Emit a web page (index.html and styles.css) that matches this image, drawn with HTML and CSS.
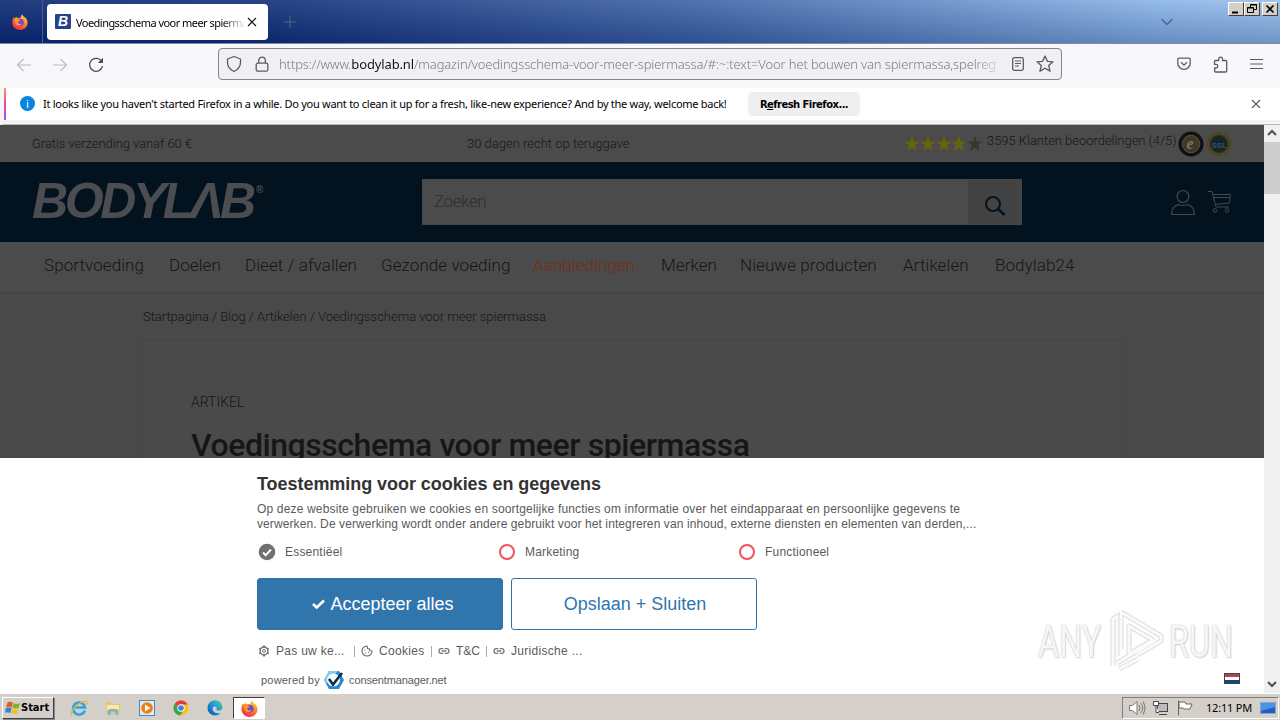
FILE: index.html
```html
<!DOCTYPE html>
<html lang="nl">
  <head>
    <meta charset="UTF-8" />
    <meta name="viewport" content="width=device-width, initial-scale=1.0" />
    <title>Voedingsschema voor meer spiermassa</title>
    <link rel="stylesheet" href="styles.css">
  </head>

  <body>
    <!-- shared icons -->
    <svg class="defs" width="0" height="0">
      <defs>
        <linearGradient id="fox" x1="0.8" y1="0" x2="0.3" y2="1">
          <stop offset="0" stop-color="#ffe03b" />
          <stop offset="0.45" stop-color="#ff8a1e" />
          <stop offset="1" stop-color="#f0254f" />
        </linearGradient>
        <linearGradient id="edge" x1="0" y1="1" x2="1" y2="0">
          <stop offset="0" stop-color="#0b4fa8" />
          <stop offset="0.55" stop-color="#1b9de2" />
          <stop offset="1" stop-color="#5fd068" />
        </linearGradient>
        <symbol id="firefox" viewBox="0 0 16 16">
          <path fill="url(#fox)" d="M1.6 3.2 2.6 4.4 4.2 2.6 5 4.1Q7 3.4 8.6 3.8L9 2 10.4.2 11 2Q15.700 4.700 15.600 9A7.600 7 0 0 1 .4 9Q.3 5.400 1.600 3.200z" />
          <circle cx="8.200" cy="8.300" r="3.600" fill="#7542e5" />
          <path fill="#ff9a28" d="M3 5q2.500-.7 4 .7l1.500.3-1.600 1.400-1.500.8q1.500 2.500 4.800 1.300Q8.500 12.500 5.500 11.200 2.600 9.500 3 5z" />
        </symbol>
        <symbol id="link" viewBox="0 0 12 12">
          <path fill="none" stroke="#777" stroke-width="1.300" d="M5.300 3.700H3.300a2.300 2.300 0 0 0 0 4.600h2M6.700 3.700h2a2.300 2.300 0 0 1 0 4.600h-2M3.700 6h4.600" />
        </symbol>
      </defs>
    </svg>

    <!-- tabs -->
    <header class="titlebar">
      <div class="fx-button">
        <svg width="16" height="16"><use href="#firefox" /></svg>
      </div>
      <div class="tab">
        <span class="favicon">B</span>
        <span class="tab-title">Voedingsschema voor meer spierma</span>
        <svg width="10" height="10" viewBox="0 0 10 10"><path d="M1 1l8 8M9 1L1 9" stroke="#15141a" stroke-width="1.200" /></svg>
      </div>
      <svg class="new-tab" width="12" height="12" viewBox="0 0 12 12"><path d="M6 0v12M0 6h12" stroke="#596770" stroke-width="1" /></svg>
      <svg class="tab-list" width="14" height="8" viewBox="0 0 14 8"><path d="M1.500 1L7 6.500 12.500 1" fill="none" stroke="#48658f" stroke-width="1.500" /></svg>
      <div class="win-buttons">
        <span class="win-btn"><svg width="14" height="12" viewBox="0 0 14 12"><path d="M3 9.500h6" stroke="#000" stroke-width="2" /></svg></span>
        <span class="win-btn"><svg width="14" height="12" viewBox="0 0 14 12"><path d="M5.500 4V1.500h6v5H9M5 2h7M2.500 4.500h6v5h-6zM2 5h7" fill="none" stroke="#000" /></svg></span>
        <span class="win-btn close"><svg width="14" height="12" viewBox="0 0 14 12"><path d="M3.500 2.500l7 7M10.500 2.500l-7 7" stroke="#000" stroke-width="1.600" /></svg></span>
      </div>
    </header>

    <!-- toolbar -->
    <div class="toolbar">
      <div class="nav-icons">
        <svg width="16" height="16" viewBox="0 0 16 16"><path d="M15 8H1.500M7.500 2l-6 6 6 6" fill="none" stroke="#bcbcc2" stroke-width="1.200" /></svg>
        <svg width="16" height="16" viewBox="0 0 16 16"><path d="M1 8h13.500M8.500 2l6 6-6 6" fill="none" stroke="#bcbcc2" stroke-width="1.200" /></svg>
        <svg width="16" height="16" viewBox="0 0 16 16"><path d="M13.700 4.500A6.500 6.500 0 1 0 14.500 9" fill="none" stroke="#4b4b53" stroke-width="1.300" /><path d="M15 .8V6H9.800z" fill="#4b4b53" /></svg>
      </div>
      <div class="urlbar">
        <svg width="16" height="18" viewBox="0 0 16 18"><path d="M8 1.500L14.500 4v3.500c0 4-2.200 7-6.500 9-4.300-2-6.500-5-6.500-9V4z" fill="none" stroke="#5b5b66" stroke-width="1.300" stroke-linejoin="round" /></svg>
        <svg class="lock" width="14" height="16" viewBox="0 0 14 16"><rect x="1.200" y="7.200" width="11.600" height="8" rx="1.500" fill="none" stroke="#5b5b66" stroke-width="1.300" /><path d="M3.700 7V4.500a3.300 3.300 0 0 1 6.600 0V7" fill="none" stroke="#5b5b66" stroke-width="1.300" /></svg>
        <span class="url">https://www.<b>bodylab.nl</b>/magazin/voedingsschema-voor-meer-spiermassa/#:~:text=Voor het bouwen van spiermassa,spelreg</span>
        <svg width="12" height="14" viewBox="0 0 12 14"><rect x=".7" y=".7" width="10.600" height="12.600" rx="1.500" fill="none" stroke="#5b5b66" stroke-width="1.300" /><path d="M3 4h6M3 6.500h6M3 9h4" stroke="#5b5b66" stroke-width="1.100" /></svg>
        <svg class="star" width="18" height="18" viewBox="0 0 16 16"><path d="M8 1l2.100 4.600 5 .5-3.800 3.300 1.200 5L8 11.800l-4.500 2.600 1.200-5L.9 6.100l5-.5z" fill="none" stroke="#5b5b66" stroke-width="1.200" stroke-linejoin="round" /></svg>
      </div>
      <div class="tool-icons">
        <svg width="14" height="14" viewBox="0 0 14 14"><path d="M2 1.200h10a1.200 1.200 0 0 1 1.200 1.200v3.800a6.200 6.200 0 0 1-12.400 0V2.400A1.200 1.200 0 0 1 2 1.200zM4 5.200l3 2.900 3-2.900" fill="none" stroke="#5b5b66" stroke-width="1.300" /></svg>
        <svg width="15" height="17" viewBox="0 0 15 17"><path d="M1.500 7V5.500q0-1 1-1h3.200V3a1.900 1.900 0 0 1 3.800 0v1.500h3.200q1 0 1 1v9.500q0 1-1 1h-10q-1 0-1-1V12H3a1.800 1.800 0 0 0 0-3.600H1.500z" fill="none" stroke="#5b5b66" stroke-width="1.300" /></svg>
        <svg width="13" height="12" viewBox="0 0 13 12"><path d="M0 1.500h13M0 6h13M0 10.500h13" stroke="#5b5b66" stroke-width="1.200" /></svg>
      </div>
    </div>

    <!-- notification -->
    <div class="notice">
      <span class="info">i</span>
      <span class="notice-text">It looks like you haven't started Firefox in a while. Do you want to clean it up for a fresh, like-new experience? And by the way, welcome back!</span>
      <button class="refresh">R<u>e</u>fresh Firefox...</button>
      <svg class="notice-close" width="10" height="10" viewBox="0 0 10 10"><path d="M1 1l8 8M9 1L1 9" stroke="#5b5b66" stroke-width="1.100" /></svg>
    </div>

    <div class="viewport">
      <main class="page">
        <div class="usp">
          <span class="usp-left">Gratis verzending vanaf 60 €</span>
          <span class="usp-mid">30 dagen recht op teruggave</span>
          <div class="rating">
            <svg width="79" height="16" viewBox="0 0 79 16">
              <defs><path id="st" d="M8 0l2 5.500 5.500.1-4.400 3.500L12.600 15 8 11.500 3.400 15l1.500-5.900L.5 5.600 6 5.500z" /></defs>
              <g fill="#67640b"><use href="#st" /><use href="#st" x="16" /><use href="#st" x="32" /><use href="#st" x="47" /></g>
              <use href="#st" x="63" fill="#38352f" />
            </svg>
            <span class="rating-text">3595 Klanten beoordelingen (4/5)</span>
            <svg width="26" height="26" viewBox="0 0 26 26"><circle cx="13" cy="13" r="10.800" fill="#3c3a24" stroke="#111" stroke-width="3.500" /><circle cx="13" cy="13" r="8.700" fill="none" stroke="#55533d" /><text x="8.500" y="18" class="seal-e">e</text></svg>
            <svg class="ssl" width="26" height="26" viewBox="0 0 26 26"><circle cx="13" cy="13" r="10.500" fill="#13262c" stroke="#4e4519" stroke-width="3" /><circle cx="13" cy="13" r="8.500" fill="none" stroke="#333" stroke-dasharray="2 1" /><text x="5.500" y="16.500" class="seal-ssl">SSL</text></svg>
          </div>
        </div>

        <div class="shop-head">
          <div class="logo" aria-label="BODYLAB">BODYLΛB<sup>®</sup></div>
          <div class="search">
            <span class="search-input">Zoeken</span>
            <span class="search-btn"><svg width="22" height="22" viewBox="0 0 22 22"><circle cx="9" cy="9" r="7" fill="none" stroke="#04131f" stroke-width="2" /><path d="M14 14l6.500 6" stroke="#04131f" stroke-width="2.600" /></svg></span>
          </div>
          <div class="account">
            <svg width="24" height="27" viewBox="0 0 24 27"><path d="M12 1.500a5.800 6 0 0 1 0 12 5.800 6 0 0 1 0-12zM.8 25.500v-2.200q.4-5.800 6.600-7.800 4.600 2 9.200 0 6.200 2 6.600 7.800v2.200z" fill="none" stroke="#414a51" stroke-width="1.200" /></svg>
            <svg width="25" height="25" viewBox="0 0 25 25"><path d="M1 2.500h4l4 15.500h13M5.500 5.500h17.800L22.500 14 8.500 15.500M6.300 8.500h16.500" fill="none" stroke="#414a51" /><circle cx="8" cy="21.500" r="1.800" fill="none" stroke="#414a51" /><circle cx="20" cy="21.500" r="1.800" fill="none" stroke="#414a51" /></svg>
          </div>
        </div>

        <nav class="menu">
          <a>Sportvoeding</a>
          <a>Doelen</a>
          <a>Dieet / afvallen</a>
          <a>Gezonde voeding</a>
          <a class="sale">Aanbiedingen</a>
          <a>Merken</a>
          <a>Nieuwe producten</a>
          <a>Artikelen</a>
          <a>Bodylab24</a>
        </nav>

        <div class="crumbs">Startpagina / Blog / Artikelen / Voedingsschema voor meer spiermassa</div>
        <article class="article">
          <div class="kicker">ARTIKEL</div>
          <h1>Voedingsschema voor meer spiermassa</h1>
        </article>
      </main>

      <!-- cookie banner -->
      <section class="consent">
        <h2>Toestemming voor cookies en gegevens</h2>
        <p><span class="line-one">Op deze website gebruiken we cookies en soortgelijke functies om informatie over het eindapparaat en persoonlijke gegevens te</span><br /><span class="line-two">verwerken. De verwerking wordt onder andere gebruikt voor het integreren van inhoud, externe diensten en elementen van derden,...</span></p>
        <div class="purposes">
          <span class="purpose"><svg width="18" height="18" viewBox="0 0 18 18"><circle cx="9" cy="9" r="8.300" fill="#707070" /><path d="M5 9.500l2.700 2.700 5.300-5.700" fill="none" stroke="#fff" stroke-width="2" /></svg>Essentiëel</span>
          <span class="purpose"><i class="ring"></i>Marketing</span>
          <span class="purpose"><i class="ring"></i>Functioneel</span>
        </div>
        <div class="actions">
          <button class="btn accept"><svg width="13" height="10" viewBox="0 0 13 10"><path d="M1 5l3.700 3.500L12 1.500" fill="none" stroke="#fff" stroke-width="2.600" /></svg>Accepteer alles</button>
          <button class="btn save">Opslaan + Sluiten</button>
        </div>
        <div class="links">
          <svg width="12" height="12" viewBox="0 0 12 12"><circle cx="6" cy="6" r="3.900" fill="none" stroke="#737373" stroke-width="1.500" /><circle cx="6" cy="6" r="1.500" fill="none" stroke="#737373" /><path d="M6 .6v2M6 9.400v2M1.300 3.300l1.700 1M9 7.700l1.700 1M1.300 8.700l1.700-1M9 4.300l1.700-1" stroke="#737373" stroke-width="1.900" /></svg>
          <span class="lk-pas">Pas uw ke...</span><i class="sep"></i>
          <svg width="12" height="12" viewBox="0 0 12 12"><path d="M6 1a5 5 0 1 0 5 5L9 5.700 8.500 4 6.500 3.500z" fill="none" stroke="#666" stroke-width="1.100" /><path d="M3.500 5h1M4 8h1M7 7.500h1" stroke="#666" /></svg>
          <span class="lk-cookies">Cookies</span><i class="sep"></i>
          <svg width="12" height="12"><use href="#link" /></svg>
          <span class="lk-tc">T&amp;C</span><i class="sep"></i>
          <svg width="12" height="12"><use href="#link" /></svg>
          <span class="lk-jur">Juridische ...</span>
        </div>
        <div class="powered">
          <span class="pw-by">powered by</span>
          <svg width="20" height="18" viewBox="0 0 20 18"><path d="M5 0h10l5 9-5 9H5L0 9z" fill="#238ad0" /><path d="M5 0h9L2 13 0 9z" fill="#8bc9ed" /><circle cx="9.500" cy="9" r="6.500" fill="#f4faff" /><path d="M5 8l4 5.500L18 2" fill="none" stroke="#12294b" stroke-width="2.600" /></svg>
          <span class="pw-name">consentmanager.net</span>
        </div>
      </section>
      <span class="flag"></span>

      <!-- watermark -->
      <div class="watermark">
        <span>ANY</span>
        <svg width="58" height="66" viewBox="0 0 58 66"><g fill="none" stroke-linejoin="round"><path d="M5 58V11l4-3v40M13 4v38M13 4l40 24v5L29 47M9 55l39-23M11 61l19-10M21 18l24 14-24 14z" stroke="#dfdfdf" stroke-width="5" /><path d="M5 58V11l4-3v40M13 4v38M13 4l40 24v5L29 47M9 55l39-23M11 61l19-10M21 18l24 14-24 14z" stroke="#fafafa" stroke-width="2.800" /></g></svg>
        <span>RUN</span>
      </div>

      <div class="scrollbar">
        <svg width="16" height="17" viewBox="0 0 16 17"><path d="M4 10l4-4 4 4" fill="none" stroke="#505050" stroke-width="2" /></svg>
        <span class="thumb"></span>
        <svg class="down" width="16" height="17" viewBox="0 0 16 17"><path d="M4 6l4 4 4-4" fill="none" stroke="#505050" stroke-width="2" /></svg>
      </div>
    </div>

    <!-- taskbar -->
    <footer class="taskbar">
      <div class="start">
        <svg width="16" height="16" viewBox="0 0 16 16"><path d="M2.500 2.500Q5 1 8 2.800L6.800 7.500Q4 6 1 7.300z" fill="#e8592c" /><path d="M8.800 3.200q3 1.500 6.200 0l-1.500 4.700q-3 1.400-6-.1z" fill="#76b82a" /><path d="M.8 8.200q3-1.400 5.800.2L5.300 13Q2.500 11.500 0 12.800z" fill="#2f84d2" /><path d="M7.300 8.700q3 1.500 6 .2L12 13.500q-3 1.300-6-.2z" fill="#f7c01d" /></svg>
        <span>Start</span>
      </div>
      <div class="apps">
        <svg width="18" height="18" viewBox="0 0 18 18"><path d="M14.800 11.500A6 6 0 1 1 15 8.500H4.500" fill="none" stroke="#2fa5e3" stroke-width="2.600" /><path d="M2 16.500C-1 13 9 1.500 16.500 2.500q1 1-.5 3" fill="none" stroke="#e2b63a" stroke-width="1.300" /></svg>
        <svg width="18" height="18" viewBox="0 0 18 18"><path d="M2 3h5l1 2h8v10H2z" fill="#eac568" /><path d="M3 6h12v5H3z" fill="#fae9ad" /><path d="M4 16v-4q0-2 2-2h6q2 0 2 2v4h-2.500v-3.500h-5V16z" fill="#6bb6dc" /></svg>
        <svg width="18" height="18" viewBox="0 0 18 18"><rect x="1.500" y="1.500" width="15" height="15" fill="#d9edf8" stroke="#4f88b8" /><circle cx="9" cy="9" r="5.800" fill="#f17d0d" /><path d="M7 5.500v7l5.500-3.500z" fill="#fff" /></svg>
        <svg width="18" height="18" viewBox="0 0 18 18"><circle cx="9" cy="9" r="7.500" fill="#fbc116" /><path d="M9 9L2.500 5.200A7.500 7.500 0 0 1 15.600 5.400H9z" fill="#e33b2e" /><path d="M9 9L2.500 5.200a7.500 7.500 0 0 0 5.700 11.300L11.500 11z" fill="#2da94f" /><circle cx="9" cy="9" r="3.700" fill="#fff" /><circle cx="9" cy="9" r="2.800" fill="#3f7fe8" /></svg>
        <svg width="18" height="18" viewBox="0 0 18 18"><path d="M1.500 9a7.500 7.500 0 0 1 15-.7q0 3.200-3.800 3.200-2.700 0-2.200-1.500.9-2-1.700-2.500-3 0-2 3.500 1.500 4 7.700 3.200-2 2.300-5.500 2.300A7.500 7.500 0 0 1 1.500 9z" fill="url(#edge)" /></svg>
      </div>
      <div class="active-app"><svg width="17" height="17"><use href="#firefox" /></svg></div>
      <div class="tray">
        <svg width="18" height="18" viewBox="0 0 18 18"><path d="M1.500 6.500h3L9 2.500v13l-4.500-4h-3z" fill="#fff" stroke="#777" /><path d="M11 6q2 3 0 6M13 4q3.500 5 0 10M15 2.500q4 6.500 0 13" fill="none" stroke="#777" /></svg>
        <svg width="18" height="18" viewBox="0 0 18 18"><rect x="5.500" y="4.500" width="10" height="8" fill="#bbb" stroke="#444" /><path d="M1.500 2.500h5v4h-5zM4 6.500v7h3M7 15.500h8" fill="#fff" stroke="#444" /></svg>
        <svg width="18" height="18" viewBox="0 0 18 18"><path d="M2.500 1.500v15M3 3h6l1 2h6l-2 5H8l-1-1H3z" fill="#fff" stroke="#666" /></svg>
        <span class="clock">12:11 PM</span>
        <svg width="16" height="14" viewBox="0 0 16 14"><rect x=".5" y="1.500" width="15" height="11" fill="#1e5fc0" stroke="#8aa6c8" /><path d="M1 2h14v4L1 10z" fill="#4a92e6" /></svg>
      </div>
    </footer>
  </body>
</html>
```

FILE: styles.css
```css
* {
  margin: 0;
  padding: 0;
  box-sizing: border-box;
}
body {
  width: 1280px;
  height: 720px;
  overflow: hidden;
  display: flex;
  flex-direction: column;
  font-family: "Liberation Sans", Arial, sans-serif;
  background-color: #fff;
}
svg {
  display: block;
  flex-shrink: 0;
}
span,
a,
h1,
h2 {
  white-space: nowrap;
}
.defs {
  position: absolute;
}

/* titlebar */
.titlebar {
  height: 44px;
  flex-shrink: 0;
  display: flex;
  align-items: center;
  border-bottom: 1px solid #7f8aa8;
  background: linear-gradient(rgba(255, 255, 255, 0.1), rgba(0, 20, 80, 0.25)), linear-gradient(90deg, #0a2872 0, #102f78 270px, #3f64a6 700px, #8ab5e8 1160px, #96bfec 1280px);
}
.fx-button {
  width: 43px;
  height: 43px;
  padding: 14px 0 0 12px;
  border-right: 1px solid #4a5e95;
}
.tab {
  width: 221px;
  height: 36px;
  margin-left: 4px;
  padding: 0 11px 0 8px;
  display: flex;
  align-items: center;
  border-radius: 4px;
  background-color: #fff;
}
.favicon {
  width: 16px;
  height: 15px;
  border-radius: 1px;
  background-color: #25428a;
  color: #fff;
  font: italic bold 14px/15px "Liberation Sans", sans-serif;
  text-align: center;
}
.tab-title {
  width: 171px;
  margin: 1px 0 0 5px;
  font: 11px "Noto Sans", sans-serif;
  letter-spacing: -0.54px;
  -webkit-mask-image: linear-gradient(90deg, #000 145px, transparent 170px);
}
.new-tab {
  margin-left: 16px;
}
.tab-list {
  margin-left: auto;
}
.win-buttons {
  display: flex;
  align-self: flex-start;
  margin: 2px 2px 0 54px;
}
.win-btn {
  width: 16px;
  height: 14px;
  border: 1px solid;
  border-color: #fff #404040 #404040 #fff;
  background-color: #d4d0c8;
}
.win-btn.close {
  margin-left: 2px;
}

/* toolbar */
.toolbar {
  height: 44px;
  flex-shrink: 0;
  display: flex;
  align-items: center;
  padding-bottom: 4px;
  background-color: #f8f8fa;
}
.nav-icons {
  width: 218px;
  display: flex;
  gap: 20px;
  padding: 2px 0 0 16px;
}
.urlbar {
  width: 844px;
  height: 32px;
  padding: 0 7px;
  display: flex;
  align-items: center;
  border: 1px solid #85858d;
  border-radius: 4px;
  background-color: #f0f0f4;
}
.lock {
  margin-left: 13px;
}
.url {
  width: 726px;
  margin: 0 7px 0 10px;
  color: #7b7b82;
  font: 300 13px "Noto Sans", sans-serif;
  letter-spacing: -0.14px;
  -webkit-mask-image: linear-gradient(90deg, #000 695px, transparent 728px);
}
.url b {
  color: #15141a;
  font-weight: normal;
}
.star {
  margin-left: 12px;
}
.tool-icons {
  display: flex;
  align-items: center;
  gap: 22px;
  margin-left: 115px;
}

/* notification */
.notice {
  height: 37px;
  flex-shrink: 0;
  display: flex;
  align-items: center;
  padding: 0 19px 5px 16px;
  border-left: 4px solid #f6f6f8;
  border-bottom: 1px solid #b8b8b8;
  background: linear-gradient(#ff9266, #f445a0 50%, #9059ff) 0 0 / 2px 32px no-repeat, linear-gradient(#fff 32px, #ececec 33px, #f8f8f8 35px);
}
.info {
  width: 15px;
  height: 15px;
  border-radius: 50%;
  background-color: #0a84e0;
  color: #fff;
  font: 11px/15px "Noto Sans", sans-serif;
  text-align: center;
}
.notice-text {
  width: 705px;
  padding: 0 0 1px 8px;
  font: 11px "Noto Sans", sans-serif;
  letter-spacing: -0.275px;
}
.refresh {
  width: 112px;
  height: 24px;
  margin-left: 8px;
  padding-top: 1px;
  border: 0;
  border-radius: 4px;
  background-color: #efefef;
  font: bold 10px "DejaVu Sans", sans-serif;
  letter-spacing: -0.55px;
}
.notice-close {
  margin-left: auto;
}

/* shop page, darkened behind the banner */
.viewport {
  height: 568px;
  flex-shrink: 0;
  position: relative;
  display: flex;
}
.page {
  width: 1264px;
  background-color: #494949;
  color: #161616;
  font-family: Roboto, sans-serif;
  font-weight: 300;
}
.usp {
  height: 37px;
  padding: 0 31px 0 32px;
  display: flex;
  align-items: center;
  font-size: 13px;
  background-color: #4b4b4b;
}
.usp-left {
  width: 435px;
  letter-spacing: -0.05px;
}
.usp-mid {
  width: 437px;
}
.rating {
  display: flex;
  align-items: center;
}
.rating-text {
  width: 191px;
  margin-left: 4px;
  padding-bottom: 6px;
  letter-spacing: -0.03px;
}
.ssl {
  margin-left: 2px;
}
.seal-e {
  fill: #77756a;
  font: italic bold 16px "Liberation Serif", serif;
}
.seal-ssl {
  fill: #36505a;
  font: bold 8px "Liberation Sans", sans-serif;
}
.shop-head {
  height: 80px;
  padding: 0 32px;
  display: flex;
  align-items: center;
  background-color: #02131f;
}
.logo {
  width: 390px;
  padding-bottom: 2px;
  color: #4b4d50;
  font: italic bold 50px/50px "Liberation Sans", sans-serif;
  letter-spacing: -3.4px;
}
.logo sup {
  margin-left: 3px;
  font-size: 10px;
  line-height: 10px;
  vertical-align: 25px;
}
.search {
  width: 600px;
  height: 46px;
  display: flex;
  border: 1px solid #43484c;
}
.search-input {
  flex: 1;
  padding-left: 11px;
  background-color: #4b4b4b;
  color: #2e2e2e;
  font-size: 17px;
  line-height: 43px;
  letter-spacing: -0.4px;
}
.search-btn {
  width: 53px;
  padding: 15px 0 0 16px;
  background-color: #434343;
}
.account {
  display: flex;
  gap: 12px;
  margin-left: auto;
}
.menu {
  height: 51px;
  padding: 11px 0 0 44px;
  display: grid;
  grid-template-columns: 125px 76px 136px 152px 128px 79px 163px 92px 80px;
  border-bottom: 1px solid #444;
  background-color: #4b4b4b;
  font-size: 17px;
  line-height: 24px;
  letter-spacing: 0.08px;
}
.sale {
  color: #772d13;
}
.crumbs {
  height: 47px;
  padding: 14px 0 0 143px;
  font-size: 13px;
  line-height: 19px;
  letter-spacing: -0.025px;
}
.article {
  width: 980px;
  height: 240px;
  margin-left: 142px;
  padding: 52px 0 0 48px;
  border: 1px solid #444;
  background-color: #4a4a4a;
}
.kicker {
  font-size: 14px;
  line-height: 18px;
}
.article h1 {
  margin-top: 15px;
  font-size: 32px;
  font-weight: 500;
  line-height: 38px;
  letter-spacing: -0.44px;
}

/* cookie banner */
.consent {
  position: absolute;
  left: 0;
  bottom: 0;
  width: 1264px;
  height: 235px;
  padding: 15px 0 0 257px;
  background-color: #fff;
  color: #5a5a5a;
  font-size: 12px;
}
.consent h2 {
  color: #333;
  font-size: 18px;
  line-height: 22px;
  letter-spacing: -0.05px;
}
.consent p {
  margin-top: 7px;
  line-height: 15px;
}
.line-one {
  letter-spacing: 0.165px;
}
.line-two {
  letter-spacing: 0.1px;
}
.purposes {
  height: 18px;
  margin-top: 11px;
  display: grid;
  grid-template-columns: 240px 240px 240px;
}
.purpose {
  display: flex;
  align-items: center;
  gap: 9px;
  padding-left: 1px;
  letter-spacing: 0.2px;
}
.ring {
  width: 16px;
  height: 16px;
  margin: 0 1px;
  border: 2px solid #ee5360;
  border-radius: 50%;
}
.actions {
  display: flex;
  gap: 8px;
  margin-top: 17px;
}
.btn {
  width: 246px;
  height: 52px;
  display: flex;
  align-items: center;
  justify-content: center;
  gap: 5px;
  border: 1px solid #3076ad;
  border-radius: 3px;
  font: 18px "Liberation Sans", sans-serif;
}
.accept {
  padding-left: 6px;
  background-color: #3076ad;
  color: #fff;
}
.save {
  padding-left: 2px;
  background-color: #fff;
  color: #3076ad;
}
.links {
  height: 16px;
  margin-top: 13px;
  padding-left: 1px;
  display: flex;
  align-items: center;
}
.links span {
  margin-left: 6px;
}
.sep {
  width: 1px;
  height: 11px;
  margin: 0 6px 0 7px;
  background-color: #aaa;
}
.lk-pas {
  width: 71px;
  letter-spacing: 0.28px;
}
.lk-cookies {
  width: 45px;
  letter-spacing: 0.3px;
}
.lk-tc {
  width: 23px;
}
.lk-jur {
  letter-spacing: 0.3px;
}
.powered {
  height: 20px;
  margin-top: 11px;
  padding-left: 4px;
  display: flex;
  align-items: center;
  font-size: 11px;
}
.pw-by {
  width: 63px;
  letter-spacing: 0.2px;
}
.pw-name {
  margin-left: 5px;
  letter-spacing: -0.12px;
}
.flag {
  position: absolute;
  left: 1224px;
  top: 548px;
  width: 16px;
  height: 11px;
  border: 1px solid #444;
  background: linear-gradient(#b2453f 3px, #fff 3px, #fff 6px, #1e3f78 6px);
}
.watermark {
  position: absolute;
  left: 1038px;
  top: 483px;
  display: flex;
  align-items: center;
  color: #f6f6f6;
  font: 45px Roboto, sans-serif;
  text-shadow: 0 0 2px #bbb, 1px 1px 2px #d4d4d4;
}
.watermark span {
  width: 64px;
  transform: scaleX(0.72);
  transform-origin: left;
}
.watermark svg {
  margin: 0 3px 0 6px;
}
.scrollbar {
  width: 16px;
  display: flex;
  flex-direction: column;
  background-color: #f0f0f0;
}
.thumb {
  height: 52px;
  background-color: #cdcdcd;
}
.down {
  margin-top: auto;
}

/* taskbar */
.taskbar {
  height: 27px;
  flex-shrink: 0;
  display: flex;
  align-items: center;
  padding: 1px 0 0 2px;
  border-top: 1px solid #fff;
  background-color: #d4cfc8;
}
.start {
  width: 52px;
  height: 22px;
  padding-left: 2px;
  display: flex;
  align-items: center;
  border: 1px solid;
  border-color: #fff #404040 #404040 #fff;
  box-shadow: 1px 1px 0 #888;
  font: bold 11px "DejaVu Sans Condensed", "DejaVu Sans", sans-serif;
}
.apps {
  display: flex;
  gap: 16px;
  padding-left: 16px;
}
.active-app {
  width: 32px;
  height: 22px;
  margin-left: 9px;
  padding: 2px 0 0 7px;
  border: 1px solid;
  border-color: #404040 #fff #fff #404040;
  background-color: #fff;
}
.tray {
  width: 157px;
  height: 22px;
  margin: 0 1px 0 auto;
  padding-left: 5px;
  display: flex;
  align-items: center;
  gap: 6px;
  border: 1px solid;
  border-color: #808080 #fff #fff #808080;
}
.clock {
  width: 46px;
  margin: 0 2px 0 6px;
  font: 11px/14px "Noto Sans", sans-serif;
  letter-spacing: -0.2px;
}
```
